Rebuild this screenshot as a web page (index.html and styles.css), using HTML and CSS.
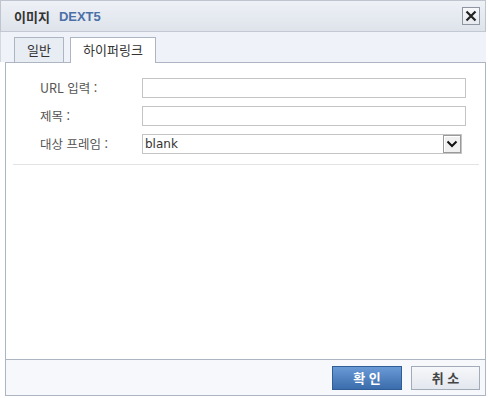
FILE: index.html
```html
<!DOCTYPE html>
<html lang="ko">
<head>
    <meta charset="UTF-8">
    <title>이미지 - DEXT5</title>
    <link rel="stylesheet" href="styles.css">
</head>
<body>
    <div class="dialog">
        <!-- Title bar -->
        <div class="titlebar">
            <span class="title">이미지</span>
            <span class="brand">DEXT5</span>
            <button class="close-btn" type="button" aria-label="닫기">
                <svg width="12" height="12" viewBox="0 0 12 12">
                    <path d="M1.5 1.5 L10.5 10.5 M10.5 1.5 L1.5 10.5" stroke="#222" stroke-width="2.2" fill="none"/>
                </svg>
            </button>
        </div>

        <!-- Tabs -->
        <div class="tabs">
            <div class="tab tab-general">일반</div>
            <div class="tab tab-link active">하이퍼링크</div>
        </div>

        <!-- Panel -->
        <div class="panel">
            <div class="form">
                <div class="form-row">
                    <label class="form-label">URL 입력 :</label>
                    <input class="text-input" type="text">
                </div>
                <div class="form-row">
                    <label class="form-label">제목 :</label>
                    <input class="text-input" type="text">
                </div>
                <div class="form-row">
                    <label class="form-label">대상 프레임 :</label>
                    <div class="select">
                        <span class="select-value">blank</span>
                        <span class="select-arrow">
                            <svg width="12" height="8" viewBox="0 0 12 8">
                                <path d="M1.5 1.5 L6 6 L10.5 1.5" stroke="#111" stroke-width="2" fill="none"/>
                            </svg>
                        </span>
                    </div>
                </div>
            </div>
            <div class="separator"></div>
        </div>

        <!-- Footer -->
        <div class="footer">
            <button class="btn btn-primary" type="button">확 인</button>
            <button class="btn btn-default" type="button">취 소</button>
        </div>
    </div>
</body>
</html>
```

FILE: styles.css
```css
/* General */
body {
    margin: 0;
    background-color: #fff;
    font-family: "Noto Sans CJK KR", "Noto Sans", sans-serif;
    font-size: 12px;
    color: #333;
}

.dialog {
    width: 486px;
}

/* Title bar */
.titlebar {
    height: 32px;
    box-sizing: border-box;
    display: flex;
    align-items: center;
    padding: 0 5px 0 13px;
    border: 1px solid #bfc5cf;
    border-bottom-color: #c3c9d3;
    background: linear-gradient(#eef1f6, #dee3eb);
}

.title {
    font-weight: 700;
    font-size: 13px;
    color: #333;
    line-height: 1;
}

.brand {
    margin-left: 9px;
    font-family: "Liberation Sans", Arial, sans-serif;
    font-weight: 700;
    font-size: 13px;
    color: #4b70a8;
    line-height: 1;
}

.close-btn {
    margin-left: auto;
    width: 18px;
    height: 18px;
    padding: 0;
    border: 1px solid #8f96a2;
    background: linear-gradient(#f7f8fa, #e6e9ee);
    display: flex;
    align-items: center;
    justify-content: center;
}

/* Tabs */
.tabs {
    height: 30px;
    box-sizing: border-box;
    display: flex;
    align-items: flex-end;
    gap: 6px;
    padding-left: 13px;
    background-color: #eff2f8;
    border-left: 1px solid #d3d8e0;
    position: relative;
    z-index: 1;
}

.tab {
    height: 25px;
    box-sizing: border-box;
    border: 1px solid #adb5c3;
    border-bottom: none;
    background-color: #e8ecf3;
    color: #333;
    font-size: 13px;
    line-height: 24px;
    text-align: center;
}

.tab-general { width: 50px; }
.tab-link { width: 86px; }

.tab.active {
    height: 26px;
    margin-bottom: -1px;
    background-color: #fff;
}

/* Panel */
.panel {
    margin-left: 5px;
    height: 297px;
    box-sizing: border-box;
    border-top: 1px solid #adb5c3;
    border-left: 1px solid #adb5c3;
    border-right: 1px solid #adb5c3;
    background-color: #fff;
    padding-top: 15px;
}

.form {
    display: flex;
    flex-direction: column;
    gap: 8px;
    padding-left: 34px;
}

.form-row {
    display: flex;
    align-items: center;
    height: 20px;
}

.form-label {
    width: 102px;
    color: #555;
    font-size: 12.5px;
    line-height: 20px;
}

.text-input {
    width: 324px;
    height: 20px;
    box-sizing: border-box;
    border: 1px solid #c4c4c4;
    margin: 0;
    padding: 0 3px;
    font-size: 12px;
    background: #fff;
}

.select {
    width: 320px;
    height: 20px;
    box-sizing: border-box;
    border: 1px solid #c4c4c4;
    display: flex;
    align-items: center;
}

.select-value {
    flex: 1;
    padding-left: 2px;
    font-family: "DejaVu Sans", sans-serif;
    font-size: 12px;
    color: #333;
    line-height: 18px;
}

.select-arrow {
    width: 18px;
    height: 18px;
    box-sizing: border-box;
    border: 1px solid #9a9a9a;
    box-shadow: inset 1px 1px 0 #fff;
    background-color: #f0f0f0;
    display: flex;
    align-items: center;
    justify-content: center;
}

.separator {
    margin: 10px 6px 0 7px;
    height: 1px;
    background-color: #e3e3e3;
}

/* Footer */
.footer {
    margin-left: 5px;
    height: 37px;
    box-sizing: border-box;
    border: 1px solid #adb5c3;
    background-color: #f7f8fc;
    display: flex;
    align-items: center;
    justify-content: flex-end;
    gap: 9px;
    padding-right: 5px;
}

.btn {
    height: 24px;
    box-sizing: border-box;
    font-family: "Noto Sans CJK KR", sans-serif;
    font-weight: 700;
    font-size: 13px;
    line-height: 20px;
    padding: 0;
}

.btn-primary {
    width: 70px;
    border: 1px solid #2f5d98;
    background: linear-gradient(#6a9ad6, #3b6cab);
    color: #fff;
}

.btn-default {
    width: 69px;
    border: 1px solid #a3abb9;
    background: linear-gradient(#f6f7fa, #e3e7ee);
    color: #444;
}
```
